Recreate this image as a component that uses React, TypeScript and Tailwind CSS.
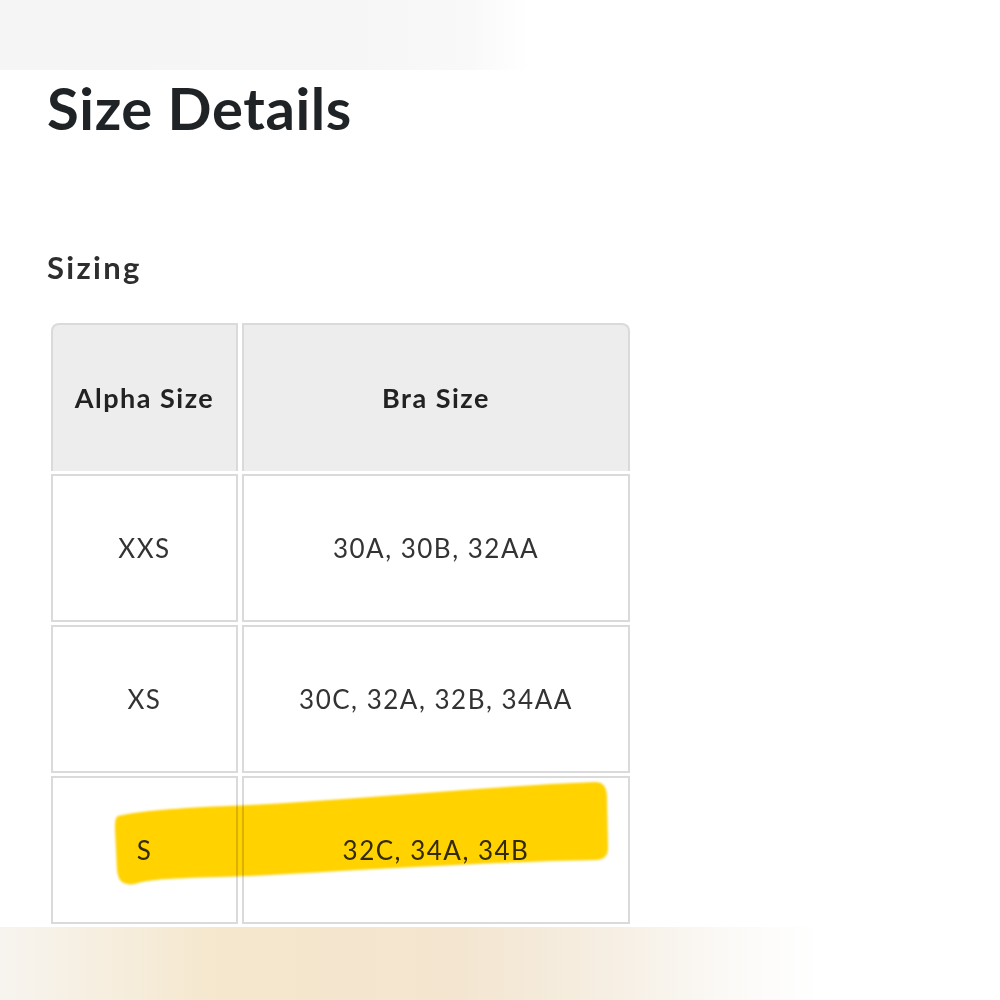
import React from 'react'

const ROWS = [
  { alpha: 'XXS', bra: '30A, 30B, 32AA' },
  { alpha: 'XS', bra: '30C, 32A, 32B, 34AA' },
  { alpha: 'S', bra: '32C, 34A, 34B' },
]

function Highlight() {
  return (
    <svg
      className="absolute left-[110px] top-[778px] mix-blend-multiply blur-[1px]"
      width="505"
      height="112"
      viewBox="0 0 505 112"
    >
      <path
        d="M8,38 C40,31 90,29 140,27 C250,21 380,8 485,4 C494,4 497,10 497,20 L498,70 C498,78 494,82 485,82 C380,84 250,92 140,98 C80,100 40,100 25,106 C12,108 8,102 7,92 L5,52 C5,44 5,40 8,38 Z"
        fill="#ffd200"
      />
    </svg>
  )
}

export default function App() {
  return (
    <div className="relative w-[1000px] h-[1000px] overflow-hidden bg-white font-['Lato','Noto_Sans',sans-serif]">
      <div className="h-[70px] bg-[linear-gradient(90deg,#f5f5f5_0%,#f6f6f6_35%,#f9f9f9_47%,#ffffff_53%)]" />

      <div className="pl-[47px]">
        <h1 className="mt-[9px] text-[58px] leading-none font-bold text-[#1f2326] tracking-[0.6px]">Size Details</h1>
        <h2 className="mt-[115px] text-[31px] leading-none font-bold text-[#2e2e2e] tracking-[2.3px]">Sizing</h2>

        <div className="mt-[40px] ml-[4px] grid grid-cols-[187px_388px] gap-x-[4px] gap-y-[3px] text-[26px] tracking-[1.5px] text-[#333]">
          <div className="h-[148px] flex items-center justify-center rounded-tl-[8px] border-2 border-b-0 border-[#dadada] bg-[#ededed] text-[27px] font-bold text-[#222]">
            Alpha Size
          </div>
          <div className="h-[148px] flex items-center justify-center rounded-tr-[8px] border-2 border-b-0 border-[#dadada] bg-[#ededed] text-[27px] font-bold text-[#222]">
            Bra Size
          </div>
          {ROWS.map(r => (
            <React.Fragment key={r.alpha}>
              <div className="h-[148px] flex items-center justify-center border-2 border-[#dadada]">{r.alpha}</div>
              <div className="h-[148px] flex items-center justify-center border-2 border-[#dadada]">{r.bra}</div>
            </React.Fragment>
          ))}
        </div>
      </div>

      <Highlight />

      <div className="absolute left-0 bottom-0 w-[1000px] h-[73px] bg-[linear-gradient(90deg,#f7f4ef_0%,#f5e7cd_22%,#f3e5cf_45%,#f6efe4_62%,#fbf9f6_72%,#ffffff_82%)]" />
    </div>
  )
}
